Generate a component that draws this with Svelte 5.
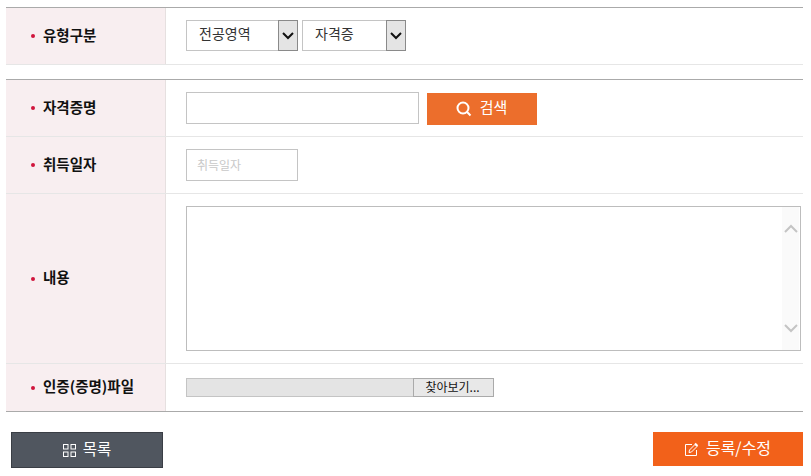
<script lang="ts">
  const typeSelects = [
    { text: "전공영역", width: 112 },
    { text: "자격증", width: 104 },
  ];
</script>

<div class="page">
  <div class="table first">
    <div class="row type">
      <div class="th"><span>유형구분</span></div>
      <div class="td selects">
        {#each typeSelects as s}
          <div class="select" style="width: {s.width}px">
            <span class="value">{s.text}</span>
            <span class="arrow">
              <svg width="12" height="8" viewBox="0 0 12 8"><path d="M1 1l5 5 5-5" fill="none" stroke="#111" stroke-width="2" /></svg>
            </span>
          </div>
        {/each}
      </div>
    </div>
  </div>

  <div class="table">
    <div class="row name">
      <div class="th"><span>자격증명</span></div>
      <div class="td search">
        <input class="text wide" type="text" />
        <button type="button" class="btn-search">
          <svg width="16" height="16" viewBox="0 0 16 16"><circle cx="7" cy="7" r="5.5" fill="none" stroke="#fff" stroke-width="2" /><path d="M10.8 10.8L14.5 14.5" stroke="#fff" stroke-width="2" /></svg>
          <span>검색</span>
        </button>
      </div>
    </div>
    <div class="row date">
      <div class="th"><span>취득일자</span></div>
      <div class="td"><input class="text short" type="text" placeholder="취득일자" /></div>
    </div>
    <div class="row content">
      <div class="th"><span>내용</span></div>
      <div class="td">
        <div class="area">
          <div class="scroll">
            <svg width="14" height="9" viewBox="0 0 14 9"><path d="M1 8L7 2l6 6" fill="none" stroke="#c4c4c4" stroke-width="2" /></svg>
            <svg width="14" height="9" viewBox="0 0 14 9"><path d="M1 1l6 6 6-6" fill="none" stroke="#c4c4c4" stroke-width="2" /></svg>
          </div>
        </div>
      </div>
    </div>
    <div class="row file">
      <div class="th"><span>인증(증명)파일</span></div>
      <div class="td">
        <div class="filebox">
          <div class="path"></div>
          <div class="browse">찾아보기...</div>
        </div>
      </div>
    </div>
  </div>

  <div class="actions">
    <button type="button" class="btn list">
      <svg width="13" height="13" viewBox="0 0 13 13" fill="none" stroke="#fff"><rect x="0.5" y="0.5" width="4.5" height="4.5" /><rect x="8" y="0.5" width="4.5" height="4.5" /><rect x="0.5" y="8" width="4.5" height="4.5" /><rect x="8" y="8" width="4.5" height="4.5" /></svg>
      <span>목록</span>
    </button>
    <button type="button" class="btn save">
      <svg width="14" height="14" viewBox="0 0 14 14" fill="none" stroke="#fff"><path d="M7 2.5H.5v11h11V8" /><path d="M4 10.5l.5-2.5L10 2.5l2 2L6.5 10z" /><path d="M10 1.5l2.5 2.5" stroke-width="2" /></svg>
      <span>등록/수정</span>
    </button>
  </div>
</div>

<style>
  :global(body) { background: #fff; }
  .page {
    width: 811px; height: 476px; box-sizing: border-box; padding: 7px 8px 0 6px; overflow: hidden;
    font-family: "Noto Sans CJK KR", "Noto Sans", sans-serif; color: #222;
  }
  .table { border-top: 1px solid #aaa; }
  .table.first { margin-bottom: 14px; }
  .row { display: grid; grid-template-columns: 160px 1fr; border-bottom: 1px solid #e6e6e6; box-sizing: border-box; }
  .row.type { height: 57px; }
  .row.name { height: 57px; }
  .row.date { height: 57px; }
  .row.content { height: 170px; }
  .row.file { height: 48px; border-bottom-color: #aaa; }
  .th {
    display: flex; align-items: center; gap: 8px; padding-left: 25px;
    background: #f8eef0; border-right: 1px solid #e6e0e0;
    font-size: 14.5px; font-weight: 700; color: #111;
  }
  .th::before { content: ""; width: 4px; height: 4px; border-radius: 50%; background: #d0143c; flex: none; }
  .th span { position: relative; top: -2px; }
  .td { display: flex; align-items: center; padding-left: 20px; }
  .selects { gap: 4px; padding-bottom: 1px; }
  .select {
    display: flex; height: 31px; box-sizing: border-box; border: 1px solid #c4c4c4;
    font-size: 14px; color: #333;
  }
  .value { flex: 1; padding-left: 12px; line-height: 24px; }
  .arrow {
    width: 20px; display: flex; align-items: center; justify-content: center;
    background: #e4e4e4; border: 1px solid #8a8a8a; margin: -1px; box-sizing: border-box;
  }
  .search { gap: 8px; }
  .text { box-sizing: border-box; border: 1px solid #c4c4c4; background: #fff; outline: 0; font: inherit; }
  .wide { width: 233px; height: 32px; }
  .short { width: 112px; height: 32px; padding: 0 10px 2px; font-size: 12px; }
  .short::placeholder { color: #c8c8c8; }
  .btn-search {
    width: 110px; height: 32px; border: 0; background: #ec6e2c; color: #fff; padding: 0 1px 0 0;
    display: flex; align-items: center; justify-content: center; gap: 8px;
    font: inherit; font-size: 15px; position: relative; top: 1px;
  }
  .btn-search span { position: relative; top: -3px; }
  .area {
    width: 615px; height: 145px; box-sizing: border-box; border: 1px solid #bdbdbd;
    display: flex; justify-content: flex-end; margin-bottom: 1px;
  }
  .scroll {
    width: 17px; margin-right: 1px; background: #fafafa; display: flex; flex-direction: column;
    justify-content: space-between; align-items: center; padding: 17px 0;
  }
  .filebox { display: flex; width: 308px; height: 19px; margin-top: 0; }
  .path { width: 227px; background: #e4e4e4; border: 1px solid #c4c4c4; border-right: 0; box-sizing: border-box; }
  .browse {
    flex: 1; background: #e8e8e8; border: 1px solid #aaa; box-sizing: border-box;
    font-size: 12px; color: #111; text-align: center; line-height: 15px; padding-right: 2px;
  }
  .actions { display: flex; justify-content: space-between; align-items: flex-start; padding: 20px 0 0 5px; }
  .btn {
    display: flex; align-items: center; justify-content: center; gap: 7px; color: #fff;
    font: inherit; font-size: 15.5px; padding: 0; box-sizing: border-box;
  }
  .btn span { position: relative; top: -2px; }
  .list { width: 152px; height: 36px; background: #50565f; border: 1px solid #3a3e45; }
  .save { width: 150px; height: 34px; background: #f2611a; border: 0; font-size: 16px; }
</style>
